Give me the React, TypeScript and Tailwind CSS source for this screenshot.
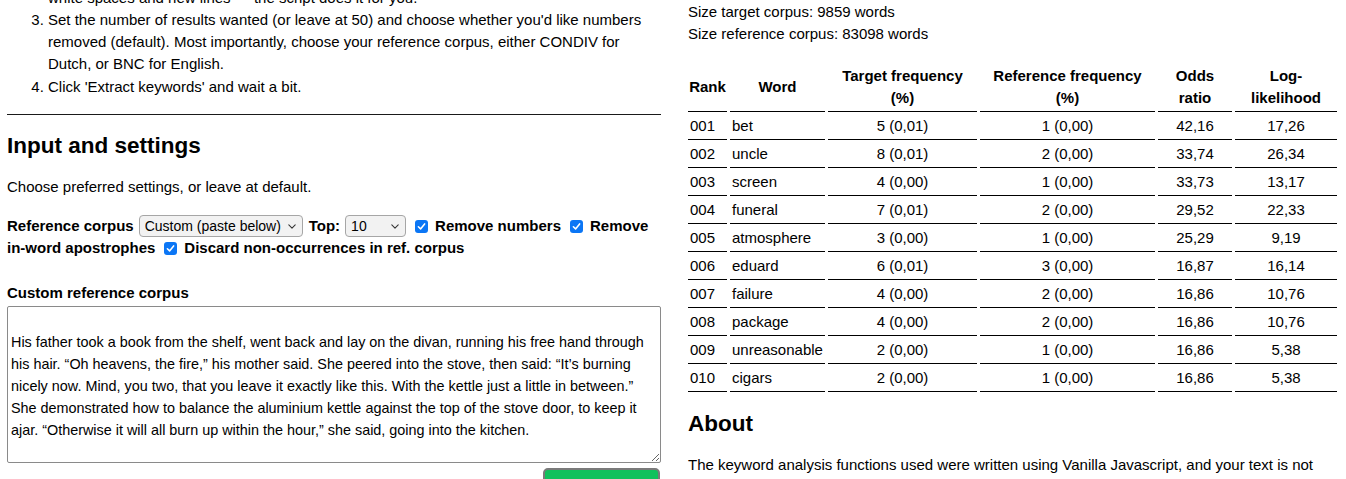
import React from 'react'

const rows = [
  { rank: '001', word: 'bet', target: '5 (0,01)', ref: '1 (0,00)', odds: '42,16', ll: '17,26' },
  { rank: '002', word: 'uncle', target: '8 (0,01)', ref: '2 (0,00)', odds: '33,74', ll: '26,34' },
  { rank: '003', word: 'screen', target: '4 (0,00)', ref: '1 (0,00)', odds: '33,73', ll: '13,17' },
  { rank: '004', word: 'funeral', target: '7 (0,01)', ref: '2 (0,00)', odds: '29,52', ll: '22,33' },
  { rank: '005', word: 'atmosphere', target: '3 (0,00)', ref: '1 (0,00)', odds: '25,29', ll: '9,19' },
  { rank: '006', word: 'eduard', target: '6 (0,01)', ref: '3 (0,00)', odds: '16,87', ll: '16,14' },
  { rank: '007', word: 'failure', target: '4 (0,00)', ref: '2 (0,00)', odds: '16,86', ll: '10,76' },
  { rank: '008', word: 'package', target: '4 (0,00)', ref: '2 (0,00)', odds: '16,86', ll: '10,76' },
  { rank: '009', word: 'unreasonable', target: '2 (0,00)', ref: '1 (0,00)', odds: '16,86', ll: '5,38' },
  { rank: '010', word: 'cigars', target: '2 (0,00)', ref: '1 (0,00)', odds: '16,86', ll: '5,38' },
]

const corpusText =
  '\nHis father took a book from the shelf, went back and lay on the divan, running his free hand through his hair. \u201cOh heavens, the fire,\u201d his mother said. She peered into the stove, then said: \u201cIt\u2019s burning nicely now. Mind, you two, that you leave it exactly like this. With the kettle just a little in between.\u201d She demonstrated how to balance the aluminium kettle against the top of the stove door, to keep it ajar. \u201cOtherwise it will all burn up within the hour,\u201d she said, going into the kitchen.'

const Check = () => (
  <span className="inline-flex items-center justify-center w-[13px] h-[13px] rounded-[3px] bg-[#0b76f5] align-[-1px] ml-[9px] mr-[7px]">
    <svg viewBox="0 0 12 12" className="w-[11px] h-[11px]">
      <path d="M2.6 6.3 L5 8.6 L9.4 3.2" stroke="white" strokeWidth="1.7" fill="none" strokeLinecap="round" strokeLinejoin="round" />
    </svg>
  </span>
)

const FakeSelect = ({ value, options, width }: { value: string; options: string[]; width: string }) => (
  <span className={`inline-flex items-center align-top h-[22px] border border-[#a6a6a6] rounded-[4px] bg-[#f2f2f2] pl-[5px] pr-[6px] font-normal ${width}`}>
    <select defaultValue={value} className="flex-1 min-w-0 appearance-none bg-transparent outline-none text-[14px] leading-[20px] font-['Liberation_Sans',Arial,sans-serif]">
      {options.map((o) => (
        <option key={o}>{o}</option>
      ))}
    </select>
    <svg viewBox="0 0 10 6" className="w-[8px] h-[5px] shrink-0">
      <path d="M1 1 L5 5 L9 1" stroke="#333" strokeWidth="1.3" fill="none" strokeLinecap="round" strokeLinejoin="round" />
    </svg>
  </span>
)

export default function App() {
  return (
    <div className="w-full h-[479px] overflow-hidden bg-white text-black text-[15px] leading-[22px] font-['Liberation_Sans',Arial,sans-serif]">
      <div className="grid grid-cols-[654px_650px] gap-x-[27px] pl-[7px]">
        {/* Left column: instructions + settings */}
        <div className="mt-[-13px]">
          <div className="pl-[41px]">white spaces and new lines — the script does it for you.</div>
          <ol start={3} className="list-decimal pl-[41px]">
            <li>
              Set the number of results wanted (or leave at 50) and choose whether you'd like numbers removed (default). Most importantly, choose your reference corpus, either CONDIV for Dutch, or BNC for English.
            </li>
            <li className="mt-[1px]">Click 'Extract keywords' and wait a bit.</li>
          </ol>
          <hr className="mt-[16px] border-t border-[#1a1a1a]" />
          <h2 className="mt-[17px] text-[22.5px] leading-[27px] font-bold">Input and settings</h2>
          <p className="mt-[17px]">Choose preferred settings, or leave at default.</p>
          <div className="mt-[17px] font-bold">
            <div className="whitespace-nowrap">
              <span>Reference corpus</span>
              <span className="ml-[5px] mr-[6px]">
                <FakeSelect value="Custom (paste below)" options={['Custom (paste below)', 'CONDIV', 'BNC']} width="w-[164px]" />
              </span>
              <span>Top:</span>
              <span className="ml-[5px]">
                <FakeSelect value="10" options={['10', '50', '100']} width="w-[61px]" />
              </span>
              <Check />
              <span>Remove numbers</span>
              <Check />
              <span>Remove</span>
            </div>
            <div className="whitespace-nowrap">
              <span>in-word apostrophes</span>
              <Check />
              <span>Discard non-occurrences in ref. corpus</span>
            </div>
          </div>
          <p className="mt-[23px] font-bold">Custom reference corpus</p>
          <textarea
            defaultValue={corpusText}
            className="block mt-[2px] w-full h-[157px] border border-[#8a8a8a] rounded-[2px] px-[3px] py-[2px] text-[14.4px] leading-[22px] font-['Liberation_Sans',Arial,sans-serif]"
          />
          <div className="flex justify-end pr-[1px] mt-[5px]">
            <button className="w-[117px] h-[44px] bg-[#10c15c] border-2 border-[#7a7a7a] rounded-[5px] text-white font-bold pt-[14px]">
              Extract keywords
            </button>
          </div>
        </div>

        {/* Right column: results */}
        <div className="mt-[1px]">
          <p>Size target corpus: 9859 words</p>
          <p>Size reference corpus: 83098 words</p>
          <table className="mt-[17px] -ml-[3px] w-[655px] table-fixed border-separate border-spacing-x-[3px] border-spacing-y-[1px]">
            <thead>
              <tr className="font-bold">
                <th className="w-[39px] px-0 py-[2px] border-b border-black align-middle">Rank</th>
                <th className="w-[95px] px-0 py-[2px] border-b border-black align-middle">Word</th>
                <th className="w-[149px] px-0 py-[2px] border-b border-black">Target frequency<br />(%)</th>
                <th className="w-[175px] px-0 py-[2px] border-b border-black">Reference frequency<br />(%)</th>
                <th className="w-[74px] px-0 py-[2px] border-b border-black">Odds<br />ratio</th>
                <th className="px-0 py-[2px] border-b border-black">Log-<br />likelihood</th>
              </tr>
            </thead>
            <tbody>
              {rows.map((r) => (
                <tr key={r.rank}>
                  <td className="px-[2px] py-[2px] border-b border-black text-left">{r.rank}</td>
                  <td className="px-[2px] py-[2px] border-b border-black text-left whitespace-nowrap">{r.word}</td>
                  <td className="py-[2px] border-b border-black text-center">{r.target}</td>
                  <td className="py-[2px] border-b border-black text-center">{r.ref}</td>
                  <td className="py-[2px] border-b border-black text-center">{r.odds}</td>
                  <td className="py-[2px] border-b border-black text-center">{r.ll}</td>
                </tr>
              ))}
            </tbody>
          </table>
          <h2 className="mt-[17px] text-[22.5px] leading-[27px] font-bold">About</h2>
          <p className="mt-[17px]">
            The keyword analysis functions used were written using Vanilla Javascript, and your text is not sent to or stored on any server.
          </p>
        </div>
      </div>
    </div>
  )
}
